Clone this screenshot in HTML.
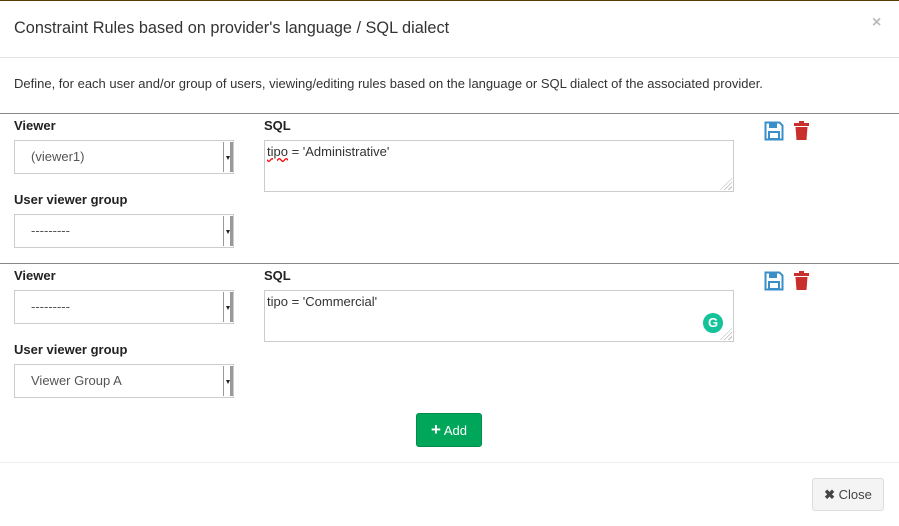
<!DOCTYPE html>
<html><head><style>
body{margin:0;width:899px;height:526px;background:#fff;font-family:"Liberation Sans",sans-serif;color:#333;position:relative;overflow:hidden}
.a{position:absolute}
.lbl{font-weight:bold;font-size:13px;color:#222}
.sel{border:1px solid #ccc;background:#fff;width:220px;height:34px;box-sizing:border-box;font-size:13px;color:#555;line-height:32px;padding-left:16px}
.sel:after{content:"";position:absolute;right:0;top:1px;width:10px;height:30px;background:#fff;border-left:1px solid #999;border-right:3px solid #999;box-sizing:border-box}
.sel i{position:absolute;right:3px;top:15px;border-left:2.5px solid transparent;border-right:2.5px solid transparent;border-top:4px solid #222;z-index:2}
.ta{border:1px solid #ccc;width:470px;height:52px;box-sizing:border-box;font-size:13px;color:#333;padding:3px 2px}
.hr{left:0;width:899px;height:1px;background:#888}
.rs{position:absolute;right:1px;bottom:1px;width:12px;height:12px;background:repeating-linear-gradient(135deg,transparent 0 2px,#bbb 2px 3px);clip-path:polygon(100% 0,100% 100%,0 100%)}
</style></head><body>
<div class="a" style="left:0;top:0;width:899px;height:1px;background:#5a3b00"></div>
<div class="a" style="left:14px;top:19px;font-size:16.3px;color:#333">Constraint Rules based on provider's language / SQL dialect</div>
<div class="a" style="left:872px;top:14px;font-size:16px;color:#bbb;font-weight:bold">×</div>
<div class="a" style="left:0;top:57px;width:899px;height:1px;background:#e5e5e5"></div>
<div class="a" style="left:14px;top:76px;font-size:13px;color:#333">Define, for each user and/or group of users, viewing/editing rules based on the language or SQL dialect of the associated provider.</div>

<div class="a hr" style="top:113px"></div>
<div class="a lbl" style="left:14px;top:118px">Viewer</div>
<div class="a sel" style="left:14px;top:140px">(viewer1)<i></i></div>
<div class="a lbl" style="left:264px;top:118px">SQL</div>
<div class="a ta" style="left:264px;top:140px"><span style="text-decoration:underline wavy red">tipo</span> = 'Administrative'<div class="rs"></div></div>
<div class="a lbl" style="left:14px;top:192px">User viewer group</div>
<div class="a sel" style="left:14px;top:214px">---------<i></i></div>

<div class="a hr" style="top:263px"></div>
<div class="a lbl" style="left:14px;top:268px">Viewer</div>
<div class="a sel" style="left:14px;top:290px">---------<i></i></div>
<div class="a lbl" style="left:264px;top:268px">SQL</div>
<div class="a ta" style="left:264px;top:290px">tipo = 'Commercial'<div class="rs"></div>
<div style="position:absolute;left:438px;top:22px;width:20px;height:20px;border-radius:50%;background:#15c39a;color:#fff;font-size:13px;font-weight:bold;text-align:center;line-height:20px">G</div></div>
<div class="a lbl" style="left:14px;top:342px">User viewer group</div>
<div class="a sel" style="left:14px;top:364px">Viewer Group A<i></i></div>

<svg class="a" style="left:764px;top:121px" width="20" height="20" viewBox="0 0 20 20"><path d="M1.5 1.5h14l3 3v14h-17z" fill="none" stroke="#3a8fc8" stroke-width="2"/><rect x="5" y="2" width="8" height="5" fill="#3a8fc8"/><rect x="5" y="11" width="10" height="7" fill="none" stroke="#3a8fc8" stroke-width="2"/></svg>
<svg class="a" style="left:794px;top:121px" width="15" height="19" viewBox="0 0 15 19"><rect x="0" y="2" width="15" height="3" fill="#c9302c"/><rect x="5" y="0" width="5" height="2" fill="#c9302c"/><path d="M1.5 6h12l-1 13h-10z" fill="#c9302c"/></svg>
<svg class="a" style="left:764px;top:271px" width="20" height="20" viewBox="0 0 20 20"><path d="M1.5 1.5h14l3 3v14h-17z" fill="none" stroke="#3a8fc8" stroke-width="2"/><rect x="5" y="2" width="8" height="5" fill="#3a8fc8"/><rect x="5" y="11" width="10" height="7" fill="none" stroke="#3a8fc8" stroke-width="2"/></svg>
<svg class="a" style="left:794px;top:271px" width="15" height="19" viewBox="0 0 15 19"><rect x="0" y="2" width="15" height="3" fill="#c9302c"/><rect x="5" y="0" width="5" height="2" fill="#c9302c"/><path d="M1.5 6h12l-1 13h-10z" fill="#c9302c"/></svg>

<div class="a" style="left:416px;top:413px;width:66px;height:34px;box-sizing:border-box;background:#00a65a;border:1px solid #008d4c;border-radius:3px;color:#fff;font-size:13px;line-height:32px;text-align:center"><b style="font-size:17px">+</b> Add</div>
<div class="a" style="left:0;top:462px;width:899px;height:1px;background:#eee"></div>
<div class="a" style="left:812px;top:478px;width:72px;height:33px;box-sizing:border-box;background:#f4f4f4;border:1px solid #ddd;border-radius:3px;color:#444;font-size:13px;line-height:31px;text-align:center"><b>✖</b> Close</div>
</body></html>
